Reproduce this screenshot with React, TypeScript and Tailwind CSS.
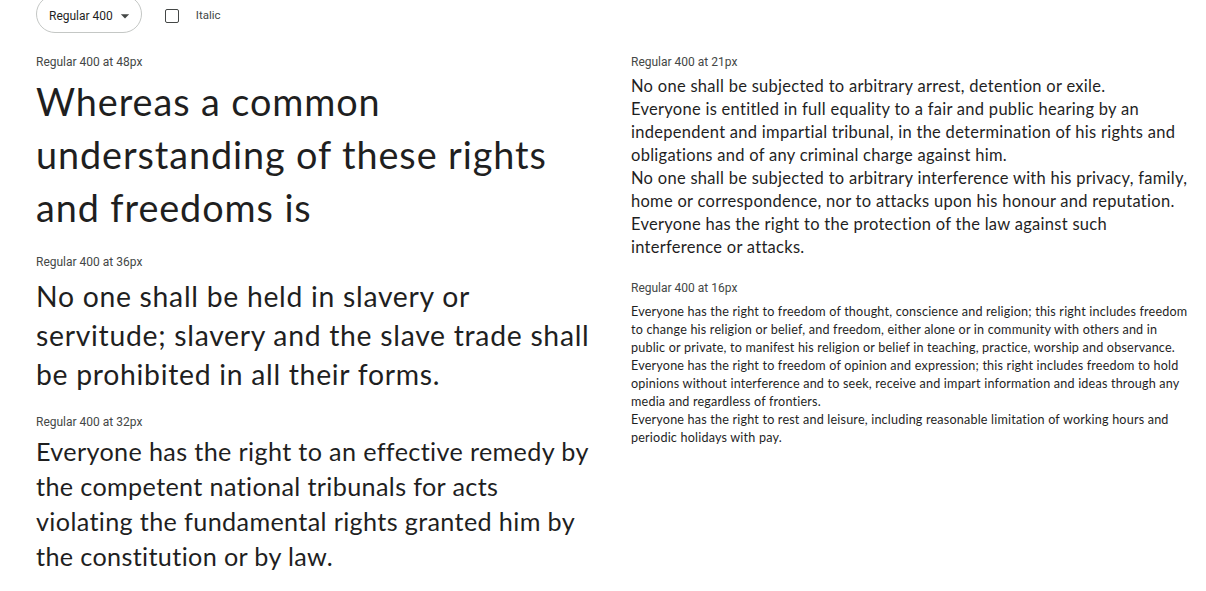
const display = "font-['Lato','Noto_Sans',sans-serif] text-[#1f1f1f] whitespace-nowrap";
const label = "font-['Roboto','Liberation_Sans',sans-serif] text-[12px] leading-[14px] text-[#444746]";

type Sample = {
  size: number;
  text: string;
  head: string;
  after: string;
  lines: string[];
};

const left: Sample[] = [
  {
    size: 48,
    text: 'text-[37.8px] leading-[53px] tracking-[0.024em]',
    head: 'mb-[6px]',
    after: 'mb-[21px]',
    lines: ['Whereas a common', 'understanding of these rights', 'and freedoms is'],
  },
  {
    size: 36,
    text: 'text-[28.35px] leading-[39px] tracking-[0.025em]',
    head: 'mb-[8px]',
    after: 'mb-[21px]',
    lines: [
      'No one shall be held in slavery or',
      'servitude; slavery and the slave trade shall',
      'be prohibited in all their forms.',
    ],
  },
  {
    size: 32,
    text: 'text-[25.2px] leading-[35px] tracking-[0.014em]',
    head: 'mb-[5px]',
    after: '',
    lines: [
      'Everyone has the right to an effective remedy by',
      'the competent national tribunals for acts',
      'violating the fundamental rights granted him by',
      'the constitution or by law.',
    ],
  },
];

const right: Sample[] = [
  {
    size: 21,
    text: 'text-[16.5px] leading-[23px] tracking-[0.017em]',
    head: 'mb-[6px]',
    after: 'mb-[22px]',
    lines: [
      'No one shall be subjected to arbitrary arrest, detention or exile.',
      'Everyone is entitled in full equality to a fair and public hearing by an',
      'independent and impartial tribunal, in the determination of his rights and',
      'obligations and of any criminal charge against him.',
      'No one shall be subjected to arbitrary interference with his privacy, family,',
      'home or correspondence, nor to attacks upon his honour and reputation.',
      'Everyone has the right to the protection of the law against such',
      'interference or attacks.',
    ],
  },
  {
    size: 16,
    text: 'text-[12.6px] leading-[18px] tracking-[0.015em]',
    head: 'mb-[8px]',
    after: '',
    lines: [
      'Everyone has the right to freedom of thought, conscience and religion; this right includes freedom',
      'to change his religion or belief, and freedom, either alone or in community with others and in',
      'public or private, to manifest his religion or belief in teaching, practice, worship and observance.',
      'Everyone has the right to freedom of opinion and expression; this right includes freedom to hold',
      'opinions without interference and to seek, receive and impart information and ideas through any',
      'media and regardless of frontiers.',
      'Everyone has the right to rest and leisure, including reasonable limitation of working hours and',
      'periodic holidays with pay.',
    ],
  },
];

const Block = ({ s }: { s: Sample }) => (
  <div className={s.after}>
    <div className={`${label} ${s.head}`}>Regular 400 at {s.size}px</div>
    <p className={`${display} ${s.text}`}>
      {s.lines.map((l, i) => (
        <span key={i} className="block">
          {l}
        </span>
      ))}
    </p>
  </div>
);

export default function App() {
  return (
    <div className="w-[1206px] h-[591px] overflow-hidden bg-white pl-[36px]">
      <div className="flex items-center h-[38px] -mt-[5px]">
        <button className="flex items-center h-full pl-[12px] pr-[6px] pt-[3px] rounded-full border border-[#c4c7c5] text-[12px] text-[#1f1f1f] font-['Roboto','Liberation_Sans',sans-serif]">
          Regular 400
          <svg width="20" height="20" viewBox="0 0 24 24" className="ml-[2px] fill-[#444746]">
            <path d="M7 10l5 5 5-5z" />
          </svg>
        </button>
        <div className="ml-[23px] mt-[3px] w-[14px] h-[14px] border-[1.5px] border-[#444746] rounded-[2px]" />
        <span className="ml-[17px] mt-[3px] text-[11.5px] text-[#444746] font-['Roboto','Liberation_Sans',sans-serif]">
          Italic
        </span>
      </div>
      <div className="flex mt-[22px]">
        <div className="w-[595px]">
          {left.map((s) => (
            <Block key={s.size} s={s} />
          ))}
        </div>
        <div className="flex-1">
          {right.map((s) => (
            <Block key={s.size} s={s} />
          ))}
        </div>
      </div>
    </div>
  );
}
